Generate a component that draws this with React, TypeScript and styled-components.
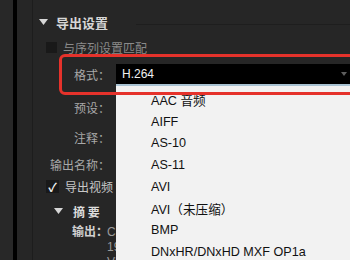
import styled, { createGlobalStyle } from "styled-components";

const FORMATS = [
  "AAC 音频",
  "AIFF",
  "AS-10",
  "AS-11",
  "AVI",
  "AVI（未压缩）",
  "BMP",
  "DNxHR/DNxHD MXF OP1a",
  "DPX",
];

export default function App() {
  return (
    <>
      <GlobalStyle />
      <Window>
        <Gutter />
        <Splitter />
        <Panel>
          <Tree>
            <Header>
              <Caret />
              <Title>导出设置</Title>
              <HeaderRule />
            </Header>
            <CheckRow $h={26} $muted>
              <CheckBox $size={11} />
              <span>与序列设置匹配</span>
            </CheckRow>
            <FormatBox>
              <Label>格式：</Label>
              <Select>
                <span>H.264</span>
                <DropArrow />
              </Select>
            </FormatBox>
            <FieldRow $h={24}>
              <Label>预设：</Label>
            </FieldRow>
            <FieldRow $h={36}>
              <Label>注释：</Label>
            </FieldRow>
            <FieldRow $h={18}>
              <Label>输出名称：</Label>
            </FieldRow>
            <CheckRow $h={26}>
              <CheckBox $size={13}>✓</CheckBox>
              <span>导出视频</span>
            </CheckRow>
            <SummaryHeader>
              <Caret />
              <SummaryTitle>摘 要</SummaryTitle>
            </SummaryHeader>
            <SummaryLine>
              <SummaryKey>输出：</SummaryKey>
              <SummaryValue>C:\Users\Desktop\序列 01.mp4</SummaryValue>
            </SummaryLine>
            <SummaryLine>
              <SummaryKey />
              <SummaryValue>1920x1080 (1.0), 25 fps, 逐行</SummaryValue>
            </SummaryLine>
            <SummaryLine>
              <SummaryKey />
              <SummaryValue>VBR, 1 次, 目标 10.00 Mbps</SummaryValue>
            </SummaryLine>

            <Menu>
              {FORMATS.map((f) => (
                <MenuItem key={f}>{f}</MenuItem>
              ))}
            </Menu>
          </Tree>
        </Panel>
      </Window>
    </>
  );
}

function Caret() {
  return (
    <svg width="9" height="6" viewBox="0 0 9 6">
      <path d="M0 0 H9 L4.5 6 Z" fill="#d6d6d6" />
    </svg>
  );
}

function DropArrow() {
  return (
    <svg width="6" height="4" viewBox="0 0 6 4" style={{ marginLeft: "auto" }}>
      <path d="M0 0 H6 L3 4 Z" fill="#5e5e5e" />
    </svg>
  );
}

const GlobalStyle = createGlobalStyle`
  html, body {
    margin: 0;
    padding: 0;
    background: #262626;
  }
  body {
    font-family: "Noto Sans CJK SC", "Noto Sans", sans-serif;
  }
`;

const Window = styled.div`
  width: 350px;
  height: 260px;
  display: flex;
  overflow: hidden;
  background: #262626;
`;

const Gutter = styled.div`
  width: 13px;
  flex: none;
  background: #282828;
`;

const Splitter = styled.div`
  width: 4px;
  flex: none;
  background: #000;
`;

const Panel = styled.div`
  flex: 1;
  min-width: 0;
  padding-left: 15px;
  background: #262626;
`;

const Tree = styled.div`
  position: relative;
  height: 100%;
  padding-top: 10px;
  border-left: 1px solid #1d1d1d;
  box-sizing: border-box;
`;

const Header = styled.div`
  height: 24px;
  display: flex;
  align-items: center;
  gap: 8px;
  padding-left: 6px;
`;

const Title = styled.div`
  font-size: 13px;
  font-weight: 700;
  color: #d6d6d6;
`;

const HeaderRule = styled.div`
  flex: 1;
  align-self: flex-start;
  margin: 14px 0 0 20px;
  border-bottom: 1px solid #1e1e1e;
`;

const CheckRow = styled.div<{ $h: number; $muted?: boolean }>`
  height: ${(p) => p.$h}px;
  display: flex;
  align-items: center;
  gap: 6px;
  padding-left: 13px;
  font-size: 12px;
  color: ${(p) => (p.$muted ? "#8a8a8a" : "#c8c8c8")};
  white-space: nowrap;
`;

const CheckBox = styled.div<{ $size: number }>`
  width: ${(p) => p.$size}px;
  height: ${(p) => p.$size}px;
  flex: none;
  background: #191919;
  color: #f2f2f2;
  font-size: 12px;
  font-weight: 700;
  line-height: ${(p) => p.$size}px;
  text-align: center;
`;

const FormatBox = styled.div`
  position: relative;
  z-index: 2;
  margin: -6px -60px 0 26px;
  height: 41px;
  box-sizing: border-box;
  border: 3px solid #e5322b;
  border-radius: 6px;
  display: flex;
  align-items: flex-start;
  padding-top: 7px;
  gap: 6px;
`;

const Label = styled.div`
  width: 48px;
  height: 20px;
  flex: none;
  display: flex;
  justify-content: flex-end;
  align-items: center;
  font-size: 12px;
  color: #a8a8a8;
  white-space: nowrap;
`;

const Select = styled.div`
  flex: 1;
  height: 20px;
  background: #000;
  display: flex;
  align-items: center;
  padding: 0 60px 0 6px;
  font-family: "Liberation Sans", sans-serif;
  font-size: 12px;
  color: #f0f0f0;
`;

const FieldRow = styled.div<{ $h: number }>`
  height: ${(p) => p.$h}px;
  display: flex;
  align-items: center;
  padding-left: 29px;
`;

const SummaryHeader = styled.div`
  height: 24px;
  display: flex;
  align-items: center;
  gap: 10px;
  padding-left: 21px;
`;

const SummaryTitle = styled.div`
  font-size: 12px;
  font-weight: 700;
  color: #dcdcdc;
`;

const SummaryLine = styled.div`
  height: 15px;
  display: flex;
  align-items: center;
  padding-left: 39px;
  font-size: 12px;
  white-space: nowrap;
`;

const SummaryKey = styled.div`
  width: 35px;
  flex: none;
  font-weight: 700;
  color: #d0d0d0;
`;

const SummaryValue = styled.div`
  font-family: "Liberation Sans", "Noto Sans CJK SC", sans-serif;
  color: #9a9a9a;
`;

const Menu = styled.div`
  position: absolute;
  z-index: 1;
  top: 84px;
  left: 83px;
  width: 300px;
  padding-top: 3px;
  background: #f2f2f2;
  border-top: 2px solid #a9c3d3;
`;

const MenuItem = styled.div`
  height: 21.7px;
  display: flex;
  align-items: center;
  padding-left: 35px;
  font-family: "Liberation Sans", "Noto Sans CJK SC", sans-serif;
  font-size: 12.6px;
  color: #111;
  white-space: nowrap;
`;
